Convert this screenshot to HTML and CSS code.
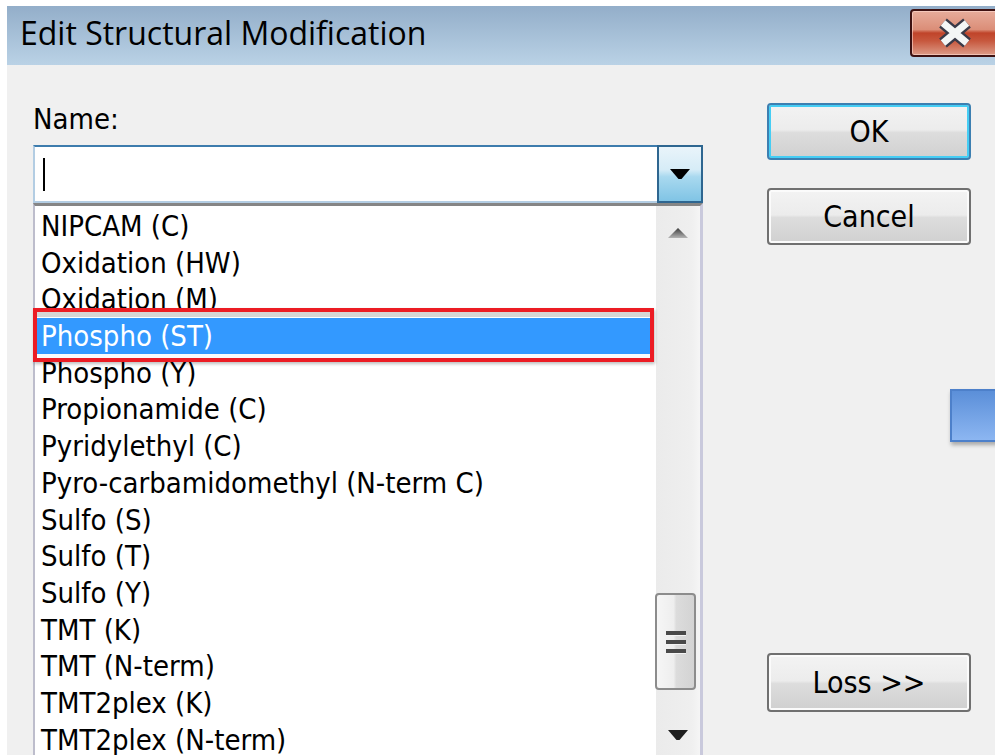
FILE: index.html
```html
<!DOCTYPE html>
<html lang="en">
<head>
<meta charset="utf-8">
<title>Edit Structural Modification</title>
<link rel="stylesheet" href="styles.css">
</head>
<body>
<div class="window">
  <header class="titlebar">
    <h1 class="title">Edit Structural Modification</h1>
    <button class="close" type="button" aria-label="Close">
      <svg width="38" height="30" viewBox="0 0 38 30">
        <path d="M7 5 L31 25 M31 5 L7 25" stroke="#3a3a48" stroke-width="12" fill="none"/>
        <path d="M7 5 L31 25 M31 5 L7 25" stroke="#f4f6f6" stroke-width="7" fill="none"/>
      </svg>
    </button>
  </header>

  <main class="content">
    <section class="field">
      <label class="label">Name:</label>
      <div class="combo">
        <div class="combo-input"><span class="caret"></span></div>
        <div class="combo-btn">
          <svg width="20" height="10" viewBox="0 0 20 10"><path d="M0 0 H20 L11.5 10 H8.5 Z" fill="#000"/></svg>
        </div>
      </div>
      <div class="list">
        <ul class="items">
          <li class="item">NIPCAM (C)</li>
          <li class="item">Oxidation (HW)</li>
          <li class="item">Oxidation (M)</li>
          <li class="item selected">Phospho (ST)</li>
          <li class="item">Phospho (Y)</li>
          <li class="item">Propionamide (C)</li>
          <li class="item">Pyridylethyl (C)</li>
          <li class="item">Pyro-carbamidomethyl (N-term C)</li>
          <li class="item">Sulfo (S)</li>
          <li class="item">Sulfo (T)</li>
          <li class="item">Sulfo (Y)</li>
          <li class="item">TMT (K)</li>
          <li class="item">TMT (N-term)</li>
          <li class="item">TMT2plex (K)</li>
          <li class="item">TMT2plex (N-term)</li>
        </ul>
        <div class="scrollbar">
          <div class="sb-btn">
            <svg width="20" height="10" viewBox="0 0 20 10">
              <defs><linearGradient id="upg" x1="0" y1="0" x2="0" y2="1"><stop offset="0" stop-color="#3c3c3c"/><stop offset="1" stop-color="#b4b4b4"/></linearGradient></defs>
              <path d="M10 0 L20 10 H0 Z" fill="url(#upg)"/>
            </svg>
          </div>
          <div class="sb-track"></div>
          <div class="sb-thumb"><span class="grip"></span><span class="grip"></span><span class="grip"></span></div>
          <div class="sb-track"></div>
          <div class="sb-btn">
            <svg width="20" height="10" viewBox="0 0 20 10"><path d="M0 0 H20 L11.5 10 H8.5 Z" fill="#1e1e1e"/></svg>
          </div>
        </div>
        <div class="highlight"></div>
      </div>
    </section>

    <aside class="actions">
      <button class="btn btn-default" type="button">OK</button>
      <button class="btn btn-cancel" type="button">Cancel</button>
      <button class="btn btn-loss" type="button">Loss &gt;&gt;</button>
    </aside>
  </main>

  <div class="peek"></div>
</div>
</body>
</html>
```

FILE: styles.css
```css
html, body {
  margin: 0;
  padding: 0;
  width: 995px;
  height: 755px;
  overflow: hidden;
  background: #ffffff;
}

.window {
  position: relative;
  margin: 6px 0 0 7px;
  width: 993px;
  font-family: "DejaVu Sans Condensed", "DejaVu Sans", sans-serif;
  font-stretch: condensed;
  font-size: 29px;
  color: #000;
}

/* title bar */
.titlebar {
  height: 59px;
  display: flex;
  justify-content: space-between;
  align-items: flex-start;
  background: linear-gradient(#93aec9, #bad2e6);
}

.title {
  margin: 5px 0 0 13px;
  font-family: "Open Sans", "Noto Sans", sans-serif;
  font-stretch: normal;
  font-weight: 400;
  font-size: 32px;
  line-height: 44px;
  color: #000;
}

.close {
  margin-top: 3px;
  width: 90px;
  height: 48px;
  padding: 0;
  border: 2px solid #3e1212;
  border-radius: 4px;
  background: linear-gradient(#e7ac9b 0%, #db8e78 42%, #c0442a 50%, #c7583e 68%, #dc9b87 100%);
  box-shadow: inset 0 0 0 1px rgba(255, 220, 210, 0.6);
  display: flex;
  align-items: center;
  justify-content: center;
}

.close svg {
  display: block;
}

/* dialog body */
.content {
  height: 690px;
  box-sizing: border-box;
  padding: 36px 0 0 26px;
  background: #f0f0f0;
  display: grid;
  grid-template-columns: 670px 204px;
  column-gap: 64px;
  align-items: start;
}

.field {
  display: flex;
  flex-direction: column;
}

.label {
  line-height: 36px;
}

/* combo box */
.combo {
  margin-top: 8px;
  height: 58px;
  display: flex;
}

.combo-input {
  flex: 1;
  background: #fff;
  border: 2px solid #b3cde3;
  border-top-color: #3d7cad;
  border-right: none;
  position: relative;
}

.caret {
  position: absolute;
  left: 8px;
  top: 11px;
  width: 2px;
  height: 33px;
  background: #000;
}

.combo-btn {
  width: 42px;
  border: 2px solid #2e6690;
  background: linear-gradient(#e9f4fa 0%, #d6ecf7 42%, #a9d9ef 55%, #80c4e5 100%);
  display: flex;
  align-items: center;
  justify-content: center;
}

/* drop-down list */
.list {
  position: relative;
  height: 557px;
  box-sizing: border-box;
  display: flex;
  background: #fff;
  border-top: 3px solid #858585;
  border-left: 2px solid #bdbdcc;
  border-right: 3px solid #c9c9dc;
}

.items {
  flex: 1;
  margin: 0;
  padding: 2px 0 0 0;
  list-style: none;
  overflow: hidden;
}

.item {
  padding-left: 6px;
  line-height: 36.7px;
  height: 36.7px;
  white-space: nowrap;
}

.item.selected {
  margin-right: 4px;
  background: #3399ff;
  color: #fff;
}

.scrollbar {
  width: 44px;
  display: grid;
  grid-template-rows: 54px 333px 97px 20px 1fr;
  background: linear-gradient(90deg, #ebebeb, #efefef 80%, #f5f5f5);
}

.sb-btn {
  display: flex;
  align-items: center;
  justify-content: center;
}

.sb-thumb {
  width: 37px;
  margin-left: -1px;
  border: 2px solid #8c8c8c;
  border-radius: 4px;
  background: linear-gradient(90deg, #f6f6f6 0%, #eeeeee 45%, #dcdcdc 52%, #d3d3d3 100%);
  display: flex;
  flex-direction: column;
  align-items: center;
  justify-content: center;
  gap: 5px;
}

.grip {
  display: block;
  width: 20px;
  height: 4px;
  background: #4a4a4a;
  box-shadow: 0 1px 0 #f4f4f4;
}

/* callout around the chosen entry */
.highlight {
  position: absolute;
  left: -2px;
  top: 102px;
  width: 621px;
  height: 54px;
  box-sizing: border-box;
  border: 4px solid #ec1c24;
  box-shadow: inset 0 5px 0 #d6d6d6, inset 0 -4px 0 #fbfbfb, 1px 2px 3px rgba(0, 0, 0, 0.25);
}

/* buttons */
.actions {
  display: flex;
  flex-direction: column;
}

.btn {
  height: 57px;
  padding: 0;
  font: inherit;
  font-size: 30px;
  font-stretch: condensed;
  color: #000;
  border: 2px solid #707070;
  border-radius: 4px;
  box-shadow: inset 0 0 0 2px #fbfbfb;
  background: linear-gradient(#f3f3f3 0%, #ececec 47%, #dddddd 52%, #d0d0d0 100%);
}

.btn-default {
  margin-top: 2px;
  border-color: #3c7fb1;
  box-shadow: inset 0 0 0 2px #45cdf4;
}

.btn-cancel {
  margin-top: 28px;
}

.btn-loss {
  margin-top: 408px;
  height: 59px;
}

/* edge of the window lying behind the dialog */
.peek {
  position: absolute;
  left: 943px;
  top: 383px;
  width: 60px;
  height: 53px;
  box-sizing: border-box;
  border: 2px solid #4d80ca;
  background: linear-gradient(#5b8fd9, #8cb6f1);
  box-shadow: 1px 3px 4px rgba(0, 0, 0, 0.3);
}
```
